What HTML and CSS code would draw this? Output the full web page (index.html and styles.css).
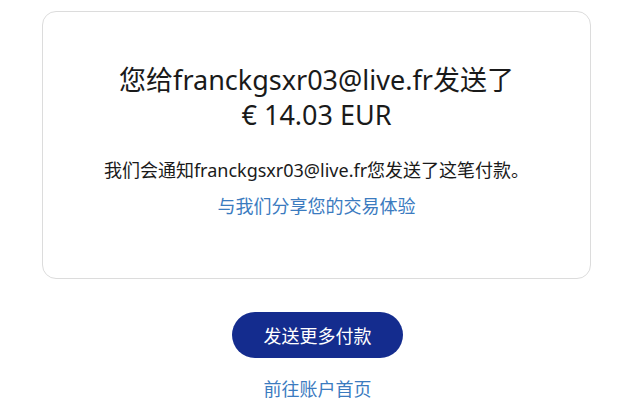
FILE: index.html
```html
<!DOCTYPE html>
<html lang="zh">
  <head>
    <meta charset="UTF-8" />
    <meta name="viewport" content="width=device-width, initial-scale=1.0" />
    <title>付款已发送</title>
    <link rel="stylesheet" href="styles.css">
  </head>
  <body>
    <div class="b-main-wrapper">
      <div class="b-card">
        <h1 class="b-card__title">您给franckgsxr03@live.fr发送了<br>€ 14.03 EUR</h1>
        <p class="b-card__par">我们会通知franckgsxr03@live.fr您发送了这笔付款。</p>
        <a class="b-card__link" href="#">与我们分享您的交易体验</a>
      </div>

      <div class="b-actions">
        <button class="b-actions__button" type="button">发送更多付款</button>
        <a class="b-actions__link" href="#">前往账户首页</a>
      </div>
    </div>
  </body>
</html>
```
FILE: styles.css
```css
body
{
  margin: 0;
  background: #ffffff;
  font-family: "Noto Sans", "Noto Sans CJK SC", sans-serif;
  color: #1a1a1a;
}

.b-main-wrapper
{
  padding-top: 11px;
}

.b-card
{
  width: 549px;
  height: 268px;
  margin: 0 0 0 42px;
  border: 1px solid #dcdcdc;
  border-radius: 14px;
  box-sizing: border-box;
  display: flex;
  flex-direction: column;
  align-items: center;
  padding-top: 50px;
}

.b-card__title
{
  margin: 0;
  font-size: 27px;
  font-weight: 400;
  line-height: 35px;
  text-align: center;
}

.b-card__par
{
  margin: 25px 0 0;
  font-size: 18px;
  line-height: 26px;
}

.b-card__link
{
  margin-top: 10px;
  font-size: 18px;
  line-height: 26px;
  color: #3b7bbf;
  text-decoration: none;
}

.b-actions
{
  display: flex;
  flex-direction: column;
  align-items: center;
  margin-top: 33px;
  padding-left: 6px;
}

.b-actions__button
{
  width: 171px;
  height: 46px;
  border: none;
  border-radius: 23px;
  background-color: #142c8e;
  color: #ffffff;
  font-family: inherit;
  font-size: 18px;
}

.b-actions__link
{
  margin-top: 18px;
  font-size: 18px;
  line-height: 26px;
  color: #3b7bbf;
  text-decoration: none;
}
```
